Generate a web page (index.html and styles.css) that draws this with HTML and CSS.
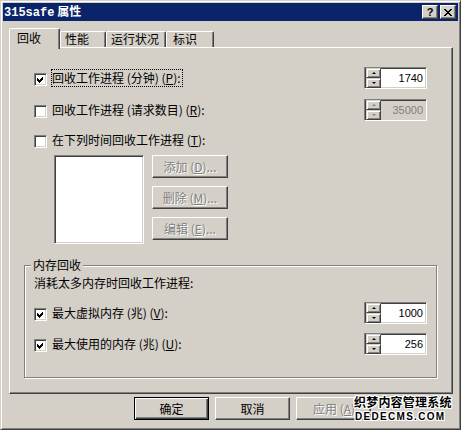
FILE: index.html
```html
<!DOCTYPE html>
<html lang="zh-CN">
<head>
    <meta charset="UTF-8">
    <title>315safe 属性</title>
    <link rel="stylesheet" href="styles.css">
</head>
<body>
    <div class="window">
        <!-- Barra de título -->
        <div class="titlebar">
            <span class="title"><span class="title-latin">315safe</span> 属性</span>
            <div class="caption-buttons">
                <span class="cap-btn cap-help">?</span>
                <span class="cap-btn">
                    <svg width="8" height="7" viewBox="0 0 8 7" shape-rendering="crispEdges"><path d="M0 0h2v1h1v1h2V1h1V0h2v1H7v1H6v1H5v1h1v1h1v1h1v1H6V6H5V5H3v1H2v1H0V6h1V5h1V4h1V3H2V2H1V1H0z" fill="#000"/></svg>
                </span>
            </div>
        </div>

        <div class="client">
            <div class="tabs">
                <div class="tab active">回收</div>
                <div class="tab tab-perf">性能</div>
                <div class="tab tab-health">运行状况</div>
                <div class="tab tab-id">标识</div>
            </div>

            <div class="panel">
                <div class="section">
                    <div class="row">
                        <span class="check checked"><svg width="7" height="7" viewBox="0 0 7 7" shape-rendering="crispEdges"><path d="M0 2L2 4L6 0V3L2 7L0 5Z" fill="#000"/></svg></span>
                        <span class="label focus">回收工作进程 (分钟) (<u>P</u>):</span>
                        <div class="spinner">
                            <div class="spin-btns">
                                <span class="spin-btn"><span class="arrow up"></span></span>
                                <span class="spin-btn"><span class="arrow down"></span></span>
                            </div>
                            <span class="spin-value">1740</span>
                        </div>
                    </div>
                    <div class="row row-second">
                        <span class="check"></span>
                        <span class="label">回收工作进程 (请求数目) (<u>R</u>):</span>
                        <div class="spinner disabled">
                            <div class="spin-btns">
                                <span class="spin-btn"><span class="arrow up"></span></span>
                                <span class="spin-btn"><span class="arrow down"></span></span>
                            </div>
                            <span class="spin-value">35000</span>
                        </div>
                    </div>
                    <div class="row row-third">
                        <span class="check"></span>
                        <span class="label">在下列时间回收工作进程 (<u>T</u>):</span>
                    </div>

                    <div class="schedule">
                        <div class="listbox"></div>
                        <div class="side-buttons">
                            <span class="btn disabled">添加 (<u>D</u>)...</span>
                            <span class="btn disabled">删除 (<u>M</u>)...</span>
                            <span class="btn disabled">编辑 (<u>E</u>)...</span>
                        </div>
                    </div>
                </div>

                <!-- Grupo de memoria -->
                <div class="group">
                    <div class="group-title">内存回收</div>
                    <div class="group-desc">消耗太多内存时回收工作进程:</div>
                    <div class="row row-mem">
                        <span class="check checked"><svg width="7" height="7" viewBox="0 0 7 7" shape-rendering="crispEdges"><path d="M0 2L2 4L6 0V3L2 7L0 5Z" fill="#000"/></svg></span>
                        <span class="label">最大虚拟内存 (兆) (<u>V</u>):</span>
                        <div class="spinner">
                            <div class="spin-btns">
                                <span class="spin-btn"><span class="arrow up"></span></span>
                                <span class="spin-btn"><span class="arrow down"></span></span>
                            </div>
                            <span class="spin-value">1000</span>
                        </div>
                    </div>
                    <div class="row row-mem2">
                        <span class="check checked"><svg width="7" height="7" viewBox="0 0 7 7" shape-rendering="crispEdges"><path d="M0 2L2 4L6 0V3L2 7L0 5Z" fill="#000"/></svg></span>
                        <span class="label">最大使用的内存 (兆) (<u>U</u>):</span>
                        <div class="spinner">
                            <div class="spin-btns">
                                <span class="spin-btn"><span class="arrow up"></span></span>
                                <span class="spin-btn"><span class="arrow down"></span></span>
                            </div>
                            <span class="spin-value">256</span>
                        </div>
                    </div>
                </div>
            </div>

            <div class="dialog-buttons">
                <span class="btn default">确定</span>
                <span class="btn">取消</span>
                <span class="btn disabled apply">应用 (<u>A</u>)</span>
            </div>
        </div>

        <div class="watermark">
            <div class="wm-cn">织梦内容管理系统</div>
            <div class="wm-en">DEDECMS.COM</div>
        </div>
    </div>
</body>
</html>
```

FILE: styles.css
```css
body {
    margin: 0;
    background: #d4d0c8;
    font-family: "Noto Sans CJK SC", "Liberation Sans", sans-serif;
    font-size: 12px;
    color: #000;
}

u {
    text-decoration: underline;
    text-underline-offset: 1px;
}

/* Ventana principal */
.window {
    position: relative;
    width: 461px;
    height: 430px;
    box-sizing: border-box;
    padding: 2px;
    background: #d4d0c8;
    border: 1px solid;
    border-color: #d4d0c8 #404040 #404040 #d4d0c8;
    box-shadow: inset 1px 1px #ffffff, inset -1px -1px #808080;
}

.titlebar {
    height: 18px;
    background: #0a246a;
    display: flex;
    align-items: center;
    padding: 0 2px 0 1px;
}

.title {
    flex: 1;
    color: #fff;
    font-weight: bold;
    font-size: 12px;
    line-height: 14px;
}

.title-latin {
    font-family: "Liberation Mono", monospace;
}

.caption-buttons {
    display: flex;
    gap: 2px;
}

.cap-btn {
    width: 16px;
    height: 14px;
    box-sizing: border-box;
    background: #d4d0c8;
    border: 1px solid;
    border-color: #ffffff #404040 #404040 #ffffff;
    box-shadow: inset -1px -1px #808080;
    display: flex;
    align-items: center;
    justify-content: center;
}

.cap-help {
    font-family: "Liberation Sans", sans-serif;
    font-weight: bold;
    font-size: 11px;
    line-height: 12px;
    padding-bottom: 1px;
}

.client {
    padding: 7px 5px 0 6px;
}

/* Pestañas */
.tabs {
    display: flex;
    align-items: flex-end;
    height: 19px;
}

.tab {
    height: 16px;
    box-sizing: border-box;
    border: 1px solid;
    border-bottom: none;
    border-color: #ffffff #404040 transparent #ffffff;
    box-shadow: inset -1px 0 #808080;
    border-radius: 2px 2px 0 0;
    line-height: 14px;
    padding-left: 4px;
}

.tab.active {
    position: relative;
    z-index: 1;
    width: 51px;
    height: 21px;
    margin-bottom: -2px;
    background: #d4d0c8;
    padding-left: 7px;
    line-height: 17px;
}

.tab-perf { width: 46px; }
.tab-health { width: 60px; }
.tab-id { width: 48px; padding-left: 6px; }

.panel {
    height: 347px;
    box-sizing: border-box;
    border: 1px solid;
    border-color: #ffffff #404040 #404040 #ffffff;
    box-shadow: inset -1px -1px #808080;
    padding: 19px 15px 0 14px;
}

.section {
    padding: 0 10px;
}

.row {
    display: flex;
    align-items: center;
    height: 22px;
}

.row-second { margin-top: 10px; }
.row-third { margin-top: 8px; }

.check {
    width: 13px;
    height: 13px;
    flex-shrink: 0;
    box-sizing: border-box;
    background: #fff;
    border: 1px solid;
    border-color: #808080 #ffffff #ffffff #808080;
    box-shadow: inset 1px 1px #404040, inset -1px -1px #d4d0c8;
    display: flex;
    align-items: center;
    justify-content: center;
    margin-top: 2px;
}

.label {
    margin-left: 5px;
    line-height: 14px;
    white-space: nowrap;
}

.label.focus {
    margin-left: 4px;
    padding: 1px 1px 1px 0;
    border: 1px dotted #000;
}

/* Control numérico */
.spinner {
    margin-left: auto;
    width: 63px;
    height: 22px;
    box-sizing: border-box;
    display: flex;
    background: #fff;
    border: 1px solid;
    border-color: #808080 #ffffff #ffffff #808080;
    box-shadow: inset 1px 1px #404040, inset -1px -1px #d4d0c8;
    padding-left: 1px;
}

.spinner.disabled {
    background: #d4d0c8;
}

.spin-btns {
    display: flex;
    flex-direction: column;
    width: 15px;
}

.spin-btn {
    height: 10px;
    box-sizing: border-box;
    background: #d4d0c8;
    border: 1px solid;
    border-color: #d4d0c8 #404040 #404040 #d4d0c8;
    box-shadow: inset 1px 1px #ffffff, inset -1px -1px #808080;
    display: flex;
    align-items: center;
    justify-content: center;
}

.arrow {
    width: 0;
    height: 0;
    border-left: 2px solid transparent;
    border-right: 2px solid transparent;
}

.arrow.up { border-bottom: 2px solid #000; }
.arrow.down { border-top: 2px solid #000; }

.disabled .arrow.up { border-bottom-color: #808080; }
.disabled .arrow.down { border-top-color: #808080; }

.spin-value {
    flex: 1;
    text-align: right;
    padding-right: 3px;
    font-family: "Liberation Sans", sans-serif;
    font-size: 11px;
    line-height: 20px;
}

.disabled .spin-value {
    color: #808080;
}

/* Lista y botones laterales */
.schedule {
    display: flex;
    gap: 8px;
    margin-top: 4px;
    padding-left: 20px;
}

.listbox {
    width: 90px;
    height: 89px;
    box-sizing: border-box;
    background: #fff;
    border: 1px solid;
    border-color: #808080 #ffffff #ffffff #808080;
    box-shadow: inset 1px 1px #404040, inset -1px -1px #d4d0c8;
}

.side-buttons {
    display: flex;
    flex-direction: column;
    gap: 8px;
}

.btn {
    width: 75px;
    height: 23px;
    box-sizing: border-box;
    display: flex;
    align-items: center;
    justify-content: center;
    background: #d4d0c8;
    border: 1px solid;
    border-color: #ffffff #404040 #404040 #ffffff;
    box-shadow: inset -1px -1px #808080;
    line-height: 14px;
}

.side-buttons .btn {
    width: 76px;
}

.btn.disabled {
    color: #808080;
    text-shadow: 1px 1px #ffffff;
}

.btn.apply {
    justify-content: flex-start;
    padding-left: 16px;
}

.btn.default {
    border: 1px solid #000;
    box-shadow: inset 1px 1px #ffffff, inset -1px -1px #404040, inset -2px -2px #808080;
}

/* Grupo */
.group {
    margin-top: 21px;
    height: 113px;
    box-sizing: border-box;
    border: 1px solid #808080;
    box-shadow: inset 1px 1px #ffffff, 1px 1px #ffffff;
    padding: 0 9px 0 9px;
}

.group-title {
    width: fit-content;
    margin: -8px 0 0 -3px;
    padding: 0 2px;
    background: #d4d0c8;
    line-height: 14px;
}

.group-desc {
    margin-top: 4px;
    line-height: 14px;
}

.row-mem { margin-top: 12px; }
.row-mem2 { margin-top: 9px; }

.dialog-buttons {
    display: flex;
    gap: 6px;
    margin-top: 3px;
    padding-left: 125px;
}

/* Marca de agua */
.watermark {
    position: absolute;
    left: 353px;
    top: 392px;
    font-weight: bold;
    color: #000;
    text-shadow: 1px 0 #fff, -1px 0 #fff, 0 1px #fff, 0 -1px #fff, 1px 1px #fff, -1px -1px #fff, 1px -1px #fff, -1px 1px #fff;
}

.wm-cn {
    font-size: 12px;
    line-height: 18px;
    letter-spacing: 0.2px;
}

.wm-en {
    font-family: "Liberation Sans", sans-serif;
    font-size: 10px;
    line-height: 12px;
    letter-spacing: 1.3px;
    padding-left: 1px;
}
```
